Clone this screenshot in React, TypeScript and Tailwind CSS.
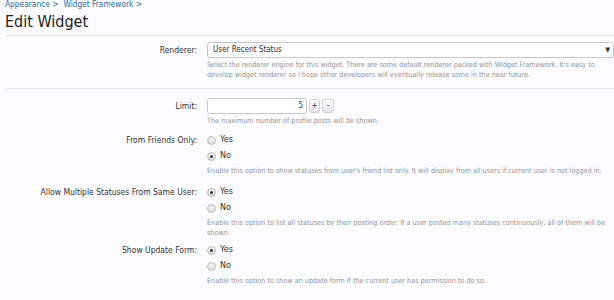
import type { ReactNode } from "react";

const font = { fontFamily: '"DejaVu Sans Condensed", "DejaVu Sans", sans-serif' };

function Radio({ checked, label }: { checked?: boolean; label: string }) {
  return (
    <label className="flex h-[16px] items-center gap-[4px] text-[9px] text-[#333]">
      <span className="flex size-[9px] items-center justify-center rounded-full border border-[#b5b5b5] bg-gradient-to-b from-[#f4f4f4] to-[#dedede]">
        {checked && <span className="size-[3px] rounded-full bg-[#333]" />}
      </span>
      {label}
    </label>
  );
}

function Row({
  label,
  children,
  className,
}: {
  label: string;
  children: ReactNode;
  className?: string;
}) {
  return (
    <div className={`flex ${className ?? ""}`}>
      <div className="w-[207px] shrink-0 pr-[10px] text-right text-[8.5px] leading-[16px] text-[#333]">
        {label}
      </div>
      <div className="flex min-w-0 flex-1 flex-col">{children}</div>
    </div>
  );
}

function Hint({ children }: { children: ReactNode }) {
  return (
    <p className="mt-[2px] pr-[2px] text-[7.2px] leading-[10px] text-[#949494]">
      {children}
    </p>
  );
}

export default function App() {
  return (
    <div
      className="h-[300px] w-[614px] overflow-hidden bg-[#fcfcff]"
      style={font}
    >
      <div className="flex gap-[5px] px-[5px] pt-[0px] text-[8.3px] leading-[9px] text-[#2b6a9c]">
        <span>Appearance &gt;</span>
        <span>Widget Framework &gt;</span>
      </div>
      <h1 className="px-[5px] pt-[2px] text-[16px] leading-[22px] text-[#222]">
        Edit Widget
      </h1>
      <div className="ml-[5px] mt-[2px] border-t border-[#e3e3ea]" />

      <div className="pt-[6px] pb-[8px]">
        <Row label="Renderer:">
          <div className="flex h-[16px] items-center justify-between rounded-[3px] border border-[#c8c8cc] bg-white pl-[5px] pr-[3px] text-[8px] text-[#333]">
            <span>User Recent Status</span>
            <span className="text-[7px]">▼</span>
          </div>
          <Hint>
            Select the renderer engine for this widget. There are some default
            renderer packed with Widget Framework. It's easy to develop widget
            renderer so I hope other developers will eventually release some in
            the near future.
          </Hint>
        </Row>
      </div>
      <div className="ml-[5px] border-t border-[#e8e8ef]" />

      <div className="flex flex-col pt-[9px]">
        <Row label="Limit:">
          <div className="flex items-center gap-[2px]">
            <div className="flex h-[16px] w-[100px] items-center justify-end rounded-[3px] border border-[#c8c8cc] bg-white pr-[3px] text-[8px] text-[#333]">
              5
            </div>
            <button className="flex h-[14px] w-[11px] items-center justify-center rounded-[3px] border border-[#cfcfd6] bg-gradient-to-b from-white to-[#e4e4ea] text-[8px] leading-none text-[#333]">
              +
            </button>
            <button className="flex h-[14px] w-[12px] items-center justify-center rounded-[3px] border border-[#cfcfd6] bg-gradient-to-b from-white to-[#e4e4ea] text-[8px] leading-none text-[#333]">
              -
            </button>
          </div>
          <Hint>The maximum number of profile posts will be shown.</Hint>
        </Row>

        <Row label="From Friends Only:" className="mt-[6px]">
          <Radio label="Yes" />
          <Radio checked label="No" />
          <Hint>
            Enable this option to show statuses from user's friend list only.
            It will display from all users if current user is not logged in.
          </Hint>
        </Row>

        <Row label="Allow Multiple Statuses From Same User:" className="mt-[8px]">
          <Radio checked label="Yes" />
          <Radio label="No" />
          <Hint>
            Enable this option to list all statuses by their posting order. If
            a user posted many statuses continuously, all of them will be
            shown.
          </Hint>
        </Row>

        <Row label="Show Update Form:" className="mt-[4px]">
          <Radio checked label="Yes" />
          <Radio label="No" />
          <Hint>
            Enable this option to show an update form if the current user has
            permission to do so.
          </Hint>
        </Row>
      </div>
    </div>
  );
}
